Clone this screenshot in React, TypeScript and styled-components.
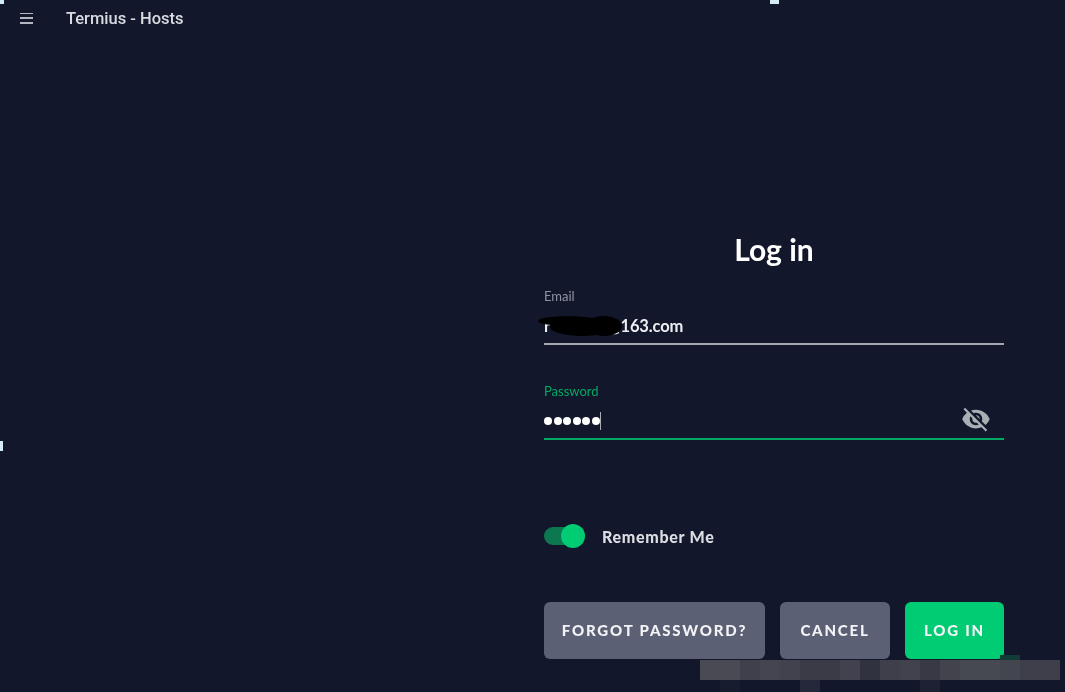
import styled, { createGlobalStyle } from 'styled-components';
import { MdVisibilityOff } from 'react-icons/md';

const GlobalStyle = createGlobalStyle`
  html, body {
    margin: 0;
    height: 100%;
    background: #13172b;
  }
  #root {
    height: 100%;
  }
`;

const Page = styled.div`
  position: relative;
  width: 1065px;
  height: 692px;
  overflow: hidden;
  background: #13172b;
  font-family: Lato, 'Liberation Sans', sans-serif;
  color: #fff;
  filter: blur(0.45px);
`;

const TitleBar = styled.header`
  display: flex;
  align-items: center;
  height: 36px;
  padding-left: 20px;
`;

const MenuIcon = styled.div`
  display: flex;
  flex-direction: column;
  justify-content: space-between;
  width: 13px;
  height: 11px;
  margin-right: 33px;

  span {
    display: block;
    height: 1.5px;
    background: #b4b7bf;
  }
`;

const AppTitle = styled.div`
  font-family: Roboto, 'Noto Sans', sans-serif;
  font-size: 16.5px;
  font-weight: 500;
  color: #d8dbe0;
`;

const Form = styled.main`
  display: flex;
  flex-direction: column;
  width: 460px;
  margin-left: 544px;
  padding-top: 196px;
`;

const Heading = styled.h1`
  margin: 0 0 23px;
  font-size: 30px;
  line-height: 34px;
  font-weight: 700;
  text-align: center;
  color: #fff;
`;

const Field = styled.div<{ $active?: boolean }>`
  position: relative;
  height: 54px;
  margin-bottom: 39px;
  border-bottom: 2px solid ${(p) => (p.$active ? '#03a865' : '#a3a6b1')};
`;

const FieldLabel = styled.label<{ $active?: boolean }>`
  display: block;
  font-size: 13px;
  line-height: 14px;
  color: ${(p) => (p.$active ? '#04a964' : '#8f95a3')};
`;

const FieldValue = styled.div`
  display: flex;
  align-items: center;
  height: 22px;
  margin-top: 12px;
  font-size: 16.5px;
  font-weight: 700;
  letter-spacing: -0.13px;
  color: #eeeff2;
`;

const Redaction = styled.svg`
  position: absolute;
  left: -6px;
  top: 27px;
`;

const Dots = styled.span`
  display: flex;
  gap: 1.5px;

  i {
    display: block;
    width: 8px;
    height: 8px;
    border-radius: 50%;
    background: #fff;
  }
`;

const Caret = styled.span`
  width: 1.5px;
  height: 18px;
  background: #a9adb6;
`;

const EyeButton = styled.span`
  position: absolute;
  right: 13px;
  top: 20px;
  display: flex;
  color: #a8afb5;
`;

const RememberRow = styled.div`
  display: flex;
  align-items: center;
  gap: 17px;
  height: 26px;
  margin-top: 44px;
  margin-bottom: 53px;
`;

const Toggle = styled.span`
  position: relative;
  display: block;
  width: 41px;
  height: 18px;

  &::before {
    content: '';
    display: block;
    width: 30px;
    height: 18px;
    border-radius: 9px;
    background: #0c7750;
  }

  &::after {
    content: '';
    position: absolute;
    right: 0;
    top: -3px;
    width: 24px;
    height: 24px;
    border-radius: 50%;
    background: #00cc74;
  }
`;

const RememberText = styled.span`
  font-size: 16px;
  font-weight: 900;
  letter-spacing: 0.7px;
  color: #dcdde2;
`;

const Actions = styled.div`
  display: flex;
  gap: 15px;
`;

const ActionButton = styled.button<{ $primary?: boolean; $width: number }>`
  width: ${(p) => p.$width}px;
  height: 57px;
  padding: 0 0 1px;
  border: 0;
  border-radius: 6px;
  background: ${(p) => (p.$primary ? '#00cc74' : '#5c6074')};
  color: #f2f3f5;
  font-family: Lato, 'Liberation Sans', sans-serif;
  font-size: 15px;
  font-weight: 900;
  letter-spacing: 1.8px;
`;

const Speck = styled.span<{ $x: number; $y: number; $w: number; $h: number }>`
  position: absolute;
  left: ${(p) => p.$x}px;
  top: ${(p) => p.$y}px;
  width: ${(p) => p.$w}px;
  height: ${(p) => p.$h}px;
  background: #d4ecf5;
`;

const GreenSliver = styled.span`
  position: absolute;
  left: 1000px;
  top: 655px;
  width: 20px;
  height: 5px;
  background: #123c38;
`;

const Mosaic = styled.div`
  position: absolute;
  left: 700px;
  top: 660px;
  display: grid;
  grid-template-columns: repeat(18, 20px);
  grid-auto-rows: 20px;
`;

const MosaicCell = styled.span<{ $color: string }>`
  background: ${(p) => p.$color};
`;

const mosaicColors = [
  '#4a4a55', '#4a4a55', '#3f404b', '#44454f', '#41424d', '#3a3b46', '#3a3b46', '#41424d', '#31323f',
  '#3e3f4a', '#41424c', '#383945', '#42434d', '#464852', '#464852', '#44464f', '#3e3f4a', '#3e3f4a',
  '#13172b', '#181c2f', '#13172b', '#13172b', '#13172b', '#25273a', '#13172b', '#13172b', '#13172b',
  '#13172b', '#13172b', '#1e2133', '#13172b', '#13172b', '#13172b', '#13172b', '#13172b', '#13172b',
];

export default function App() {
  return (
    <Page>
      <GlobalStyle />
      <TitleBar>
        <MenuIcon>
          <span />
          <span />
          <span />
        </MenuIcon>
        <AppTitle>Termius - Hosts</AppTitle>
      </TitleBar>

      <Form>
        <Heading>Log in</Heading>

        <Field>
          <FieldLabel>Email</FieldLabel>
          <FieldValue>r••••••@163.com</FieldValue>
          <Redaction width="84" height="22" viewBox="0 0 84 22">
            <ellipse cx="30" cy="5" rx="30" ry="5" fill="#000" />
            <ellipse cx="44" cy="11" rx="32" ry="9" fill="#000" />
            <ellipse cx="66" cy="10" rx="18" ry="10" fill="#000" />
          </Redaction>
        </Field>

        <Field $active>
          <FieldLabel $active>Password</FieldLabel>
          <FieldValue>
            <Dots>
              <i />
              <i />
              <i />
              <i />
              <i />
              <i />
            </Dots>
            <Caret />
          </FieldValue>
          <EyeButton>
            <MdVisibilityOff size={30} />
          </EyeButton>
        </Field>

        <RememberRow>
          <Toggle />
          <RememberText>Remember Me</RememberText>
        </RememberRow>

        <Actions>
          <ActionButton $width={221}>FORGOT PASSWORD?</ActionButton>
          <ActionButton $width={110}>CANCEL</ActionButton>
          <ActionButton $width={99} $primary>
            LOG IN
          </ActionButton>
        </Actions>
      </Form>

      <Speck $x={0} $y={0} $w={4} $h={4} />
      <Speck $x={770} $y={0} $w={9} $h={4} />
      <Speck $x={0} $y={441} $w={3} $h={10} />
      <GreenSliver />
      <Mosaic>
        {mosaicColors.map((color, i) => (
          <MosaicCell key={i} $color={color} />
        ))}
      </Mosaic>
    </Page>
  );
}
